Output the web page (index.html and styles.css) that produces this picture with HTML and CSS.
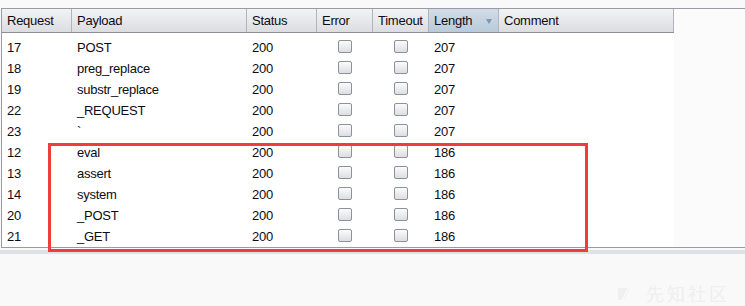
FILE: index.html
```html
<!DOCTYPE html>
<html>
<head>
  <meta charset="UTF-8">
  <title>Intruder results</title>
  <link rel="stylesheet" href="styles.css">
</head>
<body>
  <!-- 结果表格 -->
  <div class="panel">
    <div class="grid">
      <div class="row head">
        <div class="cell">Request</div>
        <div class="cell">Payload</div>
        <div class="cell">Status</div>
        <div class="cell">Error</div>
        <div class="cell">Timeout</div>
        <div class="cell sorted">Length<span class="sort-arrow"></span></div>
        <div class="cell">Comment</div>
      </div>
      <div class="spacer"></div>
      <div class="row"><div class="cell">17</div><div class="cell">POST</div><div class="cell">200</div><div class="cell check"><span class="box"></span></div><div class="cell check"><span class="box"></span></div><div class="cell">207</div><div class="cell"></div></div>
      <div class="row"><div class="cell">18</div><div class="cell">preg_replace</div><div class="cell">200</div><div class="cell check"><span class="box"></span></div><div class="cell check"><span class="box"></span></div><div class="cell">207</div><div class="cell"></div></div>
      <div class="row"><div class="cell">19</div><div class="cell">substr_replace</div><div class="cell">200</div><div class="cell check"><span class="box"></span></div><div class="cell check"><span class="box"></span></div><div class="cell">207</div><div class="cell"></div></div>
      <div class="row"><div class="cell">22</div><div class="cell">_REQUEST</div><div class="cell">200</div><div class="cell check"><span class="box"></span></div><div class="cell check"><span class="box"></span></div><div class="cell">207</div><div class="cell"></div></div>
      <div class="row"><div class="cell">23</div><div class="cell">`</div><div class="cell">200</div><div class="cell check"><span class="box"></span></div><div class="cell check"><span class="box"></span></div><div class="cell">207</div><div class="cell"></div></div>
      <div class="row"><div class="cell">12</div><div class="cell">eval</div><div class="cell">200</div><div class="cell check"><span class="box"></span></div><div class="cell check"><span class="box"></span></div><div class="cell">186</div><div class="cell"></div></div>
      <div class="row"><div class="cell">13</div><div class="cell">assert</div><div class="cell">200</div><div class="cell check"><span class="box"></span></div><div class="cell check"><span class="box"></span></div><div class="cell">186</div><div class="cell"></div></div>
      <div class="row"><div class="cell">14</div><div class="cell">system</div><div class="cell">200</div><div class="cell check"><span class="box"></span></div><div class="cell check"><span class="box"></span></div><div class="cell">186</div><div class="cell"></div></div>
      <div class="row"><div class="cell">20</div><div class="cell">_POST</div><div class="cell">200</div><div class="cell check"><span class="box"></span></div><div class="cell check"><span class="box"></span></div><div class="cell">186</div><div class="cell"></div></div>
      <div class="row"><div class="cell">21</div><div class="cell">_GET</div><div class="cell">200</div><div class="cell check"><span class="box"></span></div><div class="cell check"><span class="box"></span></div><div class="cell">186</div><div class="cell"></div></div>
    </div>
  </div>
  <div class="scrollbar"></div>

  <!-- 标注框 -->
  <div class="highlight"></div>

  <!-- 水印 -->
  <div class="watermark">
    <svg class="wm-logo" width="16" height="15" viewBox="0 0 16 15">
      <path d="M0 2 H10 L3 14 H0 Z" fill="#efefef"/>
      <path d="M12 1 L13 1 L6 14 H5 Z" fill="#f1f1f1"/>
    </svg>
    <span class="wm-text">先知社区</span>
  </div>
</body>
</html>
```

FILE: styles.css
```css
body {
  margin: 0;
  padding-top: 8px;
  background: #f9f9f9;
  font-family: "Liberation Sans", Arial, "Noto Sans CJK SC", sans-serif;
  font-size: 13px;
  letter-spacing: -0.25px;
  color: #0c0c14;
  overflow: hidden;
  position: relative;
  height: 306px;
  box-sizing: border-box;
}
.panel {
  margin: 0 -4px 0 1px;
  height: 240px;
  box-sizing: border-box;
  border: 1px solid #9a9ba2;
  background: #fbfbfb;
}
.grid {
  width: 672px;
  height: 100%;
  background: white;
}
.row {
  display: grid;
  grid-template-columns: 70px 175px 70px 56px 56px 70px 175px;
  height: 21px;
}
.cell {
  padding: 2px 0 0 5px;
  line-height: 19px;
  white-space: nowrap;
  overflow: hidden;
  box-sizing: border-box;
}
.head {
  height: 24px;
  border-bottom: 1px solid #8e8f96;
  box-sizing: border-box;
  background: linear-gradient(#f2f3f5, #dcdde1);
}
.head .cell {
  padding-top: 1px;
  line-height: 22px;
  border-right: 1px solid #b3b4bb;
}
.head .sorted {
  display: flex;
  justify-content: space-between;
  align-items: center;
  padding: 0 6px 0 5px;
  background: linear-gradient(#d2dde7, #b9cad9);
}
.sort-arrow {
  width: 0;
  height: 0;
  border-left: 3.5px solid transparent;
  border-right: 3.5px solid transparent;
  border-top: 5px solid #7c97b1;
  margin-top: 2px;
}
.spacer {
  height: 3px;
}
.check {
  display: flex;
  justify-content: center;
  align-items: center;
  padding: 0;
}
.box {
  width: 14px;
  height: 13px;
  box-sizing: border-box;
  border: 1px solid #8d9198;
  border-radius: 2px;
  background: linear-gradient(#fbfbfc, #dcdee2);
}
.scrollbar {
  height: 4px;
  margin-top: 2px;
  background: #dfe1e6;
}
.highlight {
  position: absolute;
  left: 48px;
  top: 143px;
  width: 540px;
  height: 109px;
  box-sizing: border-box;
  border: 3px solid #f13c3c;
  pointer-events: none;
}
.watermark {
  position: absolute;
  left: 618px;
  top: 280px;
  display: flex;
  align-items: center;
  gap: 12px;
  border-bottom: 1px solid #f6f5ea;
  padding-bottom: 1px;
}
.wm-text {
  font-size: 18px;
  letter-spacing: 3px;
  color: #efefef;
}
```
